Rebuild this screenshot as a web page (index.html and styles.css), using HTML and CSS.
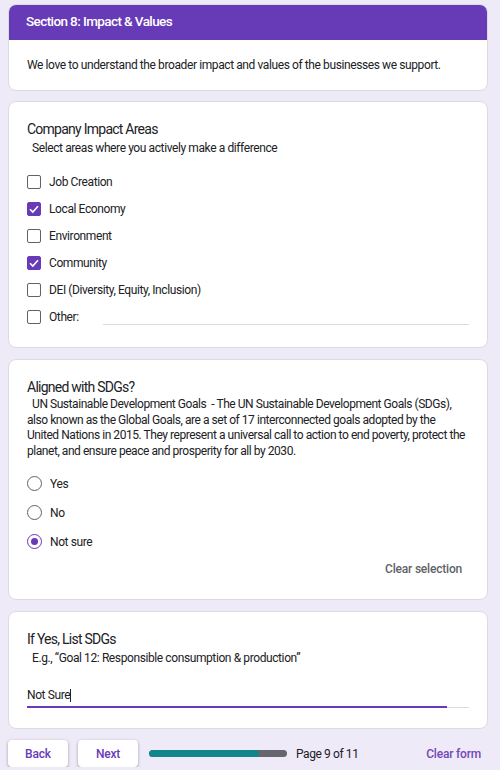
FILE: index.html
```html
<!DOCTYPE html>
<html>
<head>
<meta charset="utf-8">
<link rel="stylesheet" href="styles.css">
</head>
<body>
<div class="page">
  <section class="card head-card">
    <div class="head-bar">Section 8: Impact &amp; Values</div>
    <div class="head-desc">We love to understand the broader impact and values of the businesses we support.</div>
  </section>

  <section class="card q-card">
    <div class="q-title">Company Impact Areas</div>
    <div class="q-help">Select areas where you actively make a difference</div>
    <div class="options">
      <div class="opt"><span class="cb"></span><span class="lbl">Job Creation</span></div>
      <div class="opt"><span class="cb on"><svg viewBox="0 0 14 14" width="14" height="14"><path d="M3 7.2 L5.8 10 L11 4.2" fill="none" stroke="#fff" stroke-width="1.6"/></svg></span><span class="lbl">Local Economy</span></div>
      <div class="opt"><span class="cb"></span><span class="lbl">Environment</span></div>
      <div class="opt"><span class="cb on"><svg viewBox="0 0 14 14" width="14" height="14"><path d="M3 7.2 L5.8 10 L11 4.2" fill="none" stroke="#fff" stroke-width="1.6"/></svg></span><span class="lbl">Community</span></div>
      <div class="opt"><span class="cb"></span><span class="lbl">DEI (Diversity, Equity, Inclusion)</span></div>
      <div class="opt"><span class="cb"></span><span class="lbl">Other:</span><span class="other-line"></span></div>
    </div>
  </section>

  <section class="card q-card">
    <div class="q-title">Aligned with SDGs?</div>
    <div class="q-desc">&nbsp; UN Sustainable Development Goals&nbsp; - The UN Sustainable Development Goals (SDGs), also known as the Global Goals, are a set of 17 interconnected goals adopted by the United Nations in 2015. They represent a universal call to action to end poverty, protect the planet, and ensure peace and prosperity for all by 2030.</div>
    <div class="radios">
      <div class="ropt"><span class="rb"></span><span class="lbl">Yes</span></div>
      <div class="ropt"><span class="rb"></span><span class="lbl">No</span></div>
      <div class="ropt"><span class="rb on"></span><span class="lbl">Not sure</span></div>
    </div>
    <div class="clear-row"><span class="clear-sel">Clear selection</span></div>
  </section>

  <section class="card q-card last">
    <div class="q-title">If Yes, List SDGs</div>
    <div class="q-help">E.g., “Goal 12: Responsible consumption &amp; production”</div>
    <div class="answer">Not Sure<span class="caret"></span></div>
    <div class="answer-line"><span class="answer-fill"></span></div>
  </section>

  <div class="footer">
    <button class="btn">Back</button>
    <button class="btn">Next</button>
    <div class="progress"><span class="progress-fill"></span></div>
    <span class="page-no">Page 9 of 11</span>
    <span class="clear-form">Clear form</span>
  </div>
</div>
</body>
</html>
```

FILE: styles.css
```css
html, body {
  margin: 0;
  padding: 0;
  background: #efeaf7;
  font-family: Roboto, "Noto Sans", Arial, sans-serif;
  color: #202124;
}
.page {
  width: 480px;
  margin-left: 8px;
  padding-top: 4px;
  display: flex;
  flex-direction: column;
  letter-spacing: -0.4px;
}
.card {
  background: #fff;
  border: 1px solid #dadce0;
  border-radius: 8px;
  box-sizing: border-box;
}
.head-card {
  height: 87px;
  overflow: hidden;
}
.head-bar {
  background: #673ab7;
  color: #fff;
  height: 36px;
  margin: -1px -1px 0 -1px;
  padding-left: 18px;
  line-height: 34px;
  font-size: 13.5px;
  font-weight: 500;
  letter-spacing: -0.6px;
}
.head-desc {
  padding: 17px 18px 0 18px;
  font-size: 12px;
  line-height: 16px;
}
.q-card {
  margin-top: 10px;
  padding: 18px 18px 0 18px;
}
.q-card + .q-card { margin-top: 11px; }
.q-card:nth-of-type(2) { height: 247px; }
.q-card:nth-of-type(3) { height: 241px; }
.q-card.last { height: 118px; }
.q-title {
  font-size: 14px;
  line-height: 18px;
  letter-spacing: -0.75px;
}
.q-help {
  font-size: 12px;
  line-height: 16px;
  margin-top: 2px;
  padding-left: 5px;
}
.q-desc {
  font-size: 12px;
  line-height: 15.5px;
  margin-top: 1px;
  letter-spacing: -0.45px;
}
.options {
  margin-top: 19px;
  display: flex;
  flex-direction: column;
  gap: 13px;
}
.opt, .ropt {
  display: flex;
  align-items: center;
  height: 14px;
}
.lbl {
  font-size: 12px;
  margin-left: 8px;
}
.cb {
  width: 14px;
  height: 14px;
  box-sizing: border-box;
  border: 1.5px solid #5f6368;
  border-radius: 2px;
  display: inline-flex;
  align-items: center;
  justify-content: center;
  flex: none;
}
.cb.on {
  background: #673ab7;
  border-color: #673ab7;
}
.cb.on svg { flex: none; }
.other-line {
  flex: 1;
  height: 1px;
  background: #dadce0;
  margin-left: 24px;
  margin-top: 15px;
}
.radios {
  margin-top: 17px;
  display: flex;
  flex-direction: column;
  gap: 14px;
}
.ropt { height: 15px; }
.rb {
  width: 15px;
  height: 15px;
  box-sizing: border-box;
  border: 1.5px solid #5f6368;
  border-radius: 50%;
  flex: none;
  display: inline-flex;
  align-items: center;
  justify-content: center;
}
.rb.on { border-color: #673ab7; }
.rb.on::after {
  content: "";
  width: 7px;
  height: 7px;
  border-radius: 50%;
  background: #673ab7;
}
.clear-row {
  display: flex;
  justify-content: flex-end;
  margin-top: 13px;
  padding-right: 7px;
}
.clear-sel {
  font-size: 12px;
  font-weight: 500;
  color: #5f6368;
  letter-spacing: -0.2px;
}
.answer {
  margin-top: 21px;
  font-size: 12px;
  line-height: 16px;
  display: flex;
  align-items: center;
}
.caret {
  width: 1px;
  height: 13px;
  background: #202124;
}
.answer-line {
  margin-top: 4px;
  height: 1px;
  background: #dadce0;
  width: 442px;
  position: relative;
}
.answer-fill {
  position: absolute;
  left: 0;
  top: -1px;
  height: 2px;
  width: 420px;
  background: #673ab7;
}
.footer {
  display: flex;
  align-items: center;
  margin-top: 11px;
  height: 27px;
}
.btn {
  width: 60px;
  height: 27px;
  border: none;
  border-radius: 4px;
  background: #fff;
  box-shadow: 0 1px 2px rgba(60,64,67,.3), 0 1px 3px 1px rgba(60,64,67,.15);
  color: #673ab7;
  font-family: inherit;
  font-size: 12px;
  font-weight: 500;
  letter-spacing: -0.2px;
  padding: 0;
  margin-right: 10px;
}
.progress {
  margin-left: 1px;
  width: 138px;
  height: 7px;
  border-radius: 4px;
  background: #66666e;
  overflow: hidden;
  display: flex;
}
.progress-fill {
  width: 110px;
  background: #10868c;
  border-radius: 4px;
}
.page-no {
  margin-left: 9px;
  font-size: 12px;
}
.clear-form {
  margin-left: auto;
  margin-right: 7px;
  font-size: 12px;
  font-weight: 500;
  color: #7248b9;
  letter-spacing: -0.2px;
}
```
